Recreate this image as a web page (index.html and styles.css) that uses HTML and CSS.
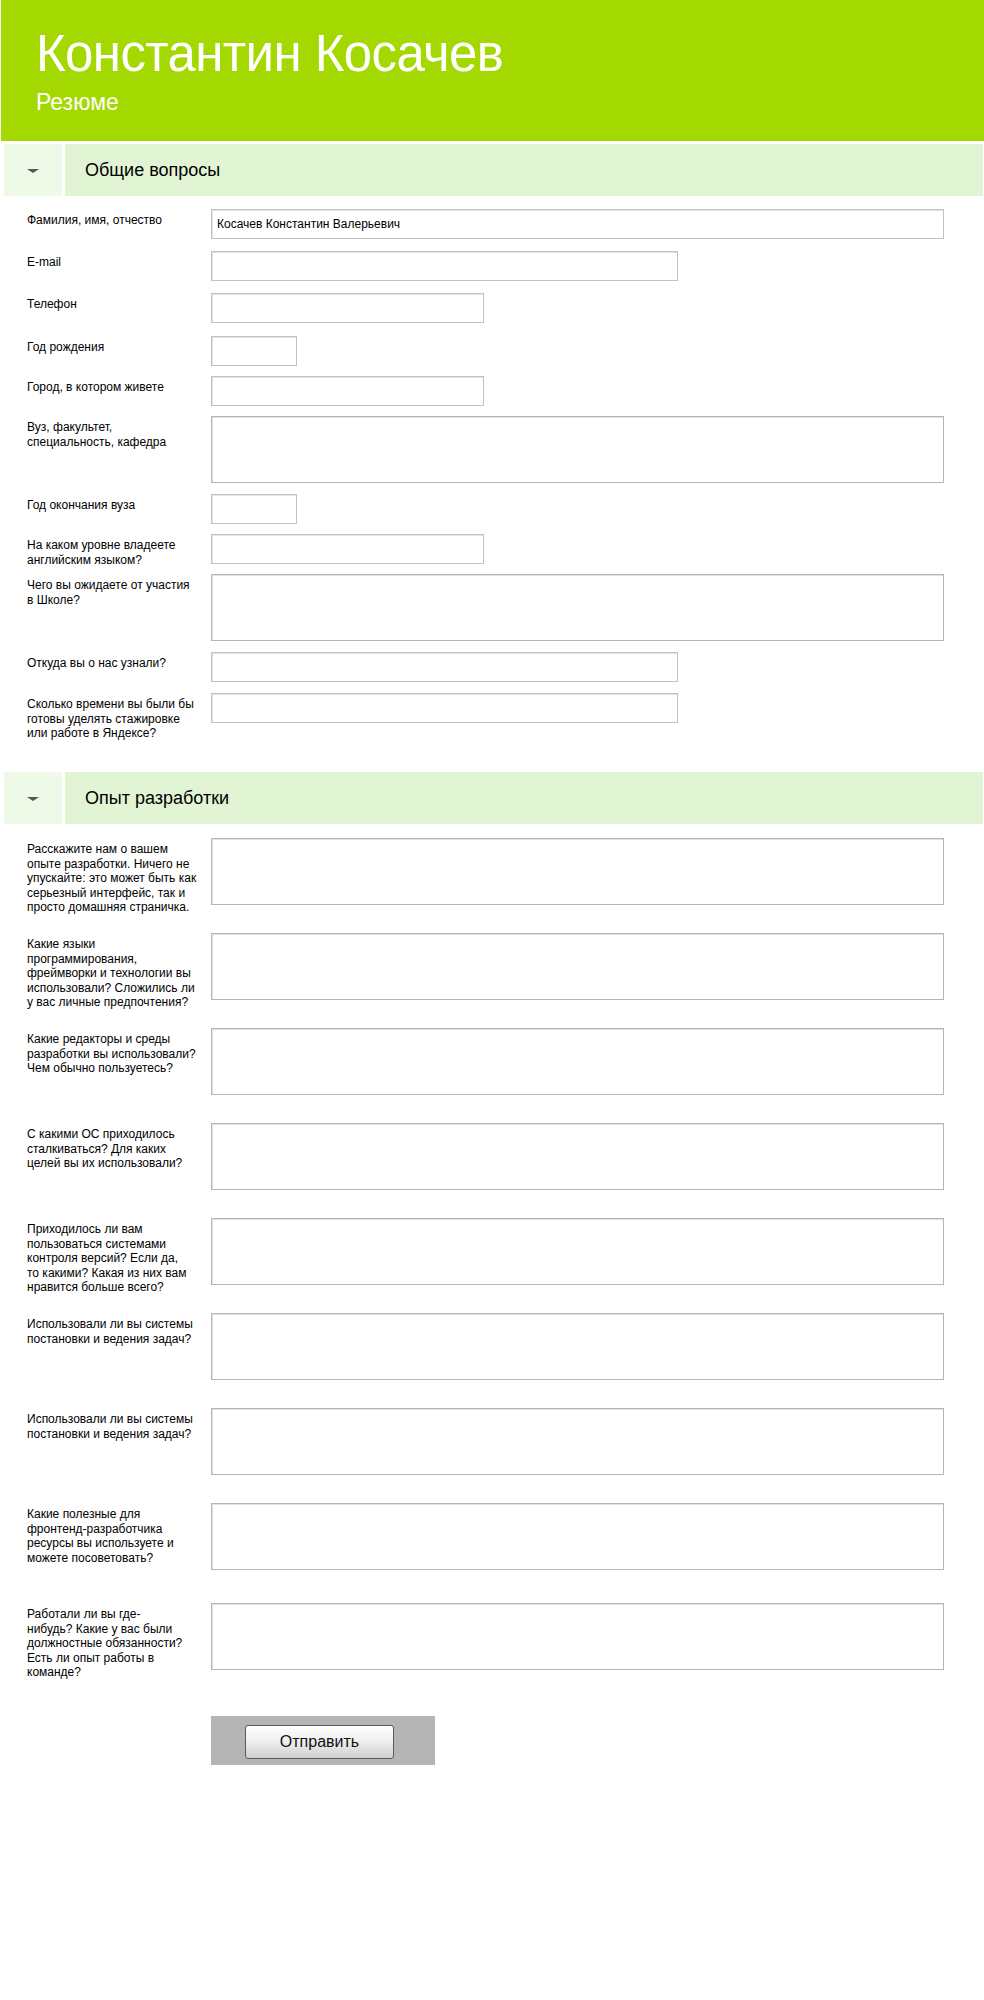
FILE: index.html
```html
<!DOCTYPE html>
<html lang="ru">
<head>
<meta charset="utf-8">
<title>Константин Косачев — Резюме</title>
<link rel="stylesheet" href="styles.css">
</head>
<body>
<header class="hero">
  <h1 class="hero__name">Константин Косачев</h1>
  <p class="hero__sub">Резюме</p>
</header>
<form class="resume">
  <section class="block">
    <div class="block__head">
      <span class="block__toggle"><span class="block__arrow"></span></span>
      <h2 class="block__title">Общие вопросы</h2>
    </div>
    <div class="block__body block__body--general">
      <div class="row row--gap12"><label class="row__label">Фамилия, имя, отчество</label><input class="field field--full" type="text" value="Косачев Константин Валерьевич"></div>
      <div class="row row--gap12"><label class="row__label">E-mail</label><input class="field field--medium" type="text"></div>
      <div class="row row--gap13"><label class="row__label">Телефон</label><input class="field field--small" type="text"></div>
      <div class="row row--gap10"><label class="row__label">Год рождения</label><input class="field field--tiny" type="text"></div>
      <div class="row row--gap10"><label class="row__label">Город, в котором живете</label><input class="field field--small" type="text"></div>
      <div class="row"><label class="row__label">Вуз, факультет,<br>специальность, кафедра</label><textarea class="area"></textarea></div>
      <div class="row row--gap10"><label class="row__label">Год окончания вуза</label><input class="field field--tiny" type="text"></div>
      <div class="row row--gap10"><label class="row__label">На каком уровне владеете<br>английским языком?</label><input class="field field--small" type="text"></div>
      <div class="row"><label class="row__label">Чего вы ожидаете от участия<br>в Школе?</label><textarea class="area"></textarea></div>
      <div class="row"><label class="row__label">Откуда вы о нас узнали?</label><input class="field field--medium" type="text"></div>
      <div class="row"><label class="row__label">Сколько времени вы были бы<br>готовы уделять стажировке<br>или работе в Яндексе?</label><input class="field field--medium" type="text"></div>
    </div>
  </section>
  <section class="block">
    <div class="block__head">
      <span class="block__toggle"><span class="block__arrow"></span></span>
      <h2 class="block__title">Опыт разработки</h2>
    </div>
    <div class="block__body block__body--dev">
      <div class="row"><label class="row__label">Расскажите нам о вашем<br>опыте разработки. Ничего не<br>упускайте: это может быть как<br>серьезный интерфейс, так и<br>просто домашняя страничка.</label><textarea class="area"></textarea></div>
      <div class="row"><label class="row__label">Какие языки<br>программирования,<br>фреймворки и технологии вы<br>использовали? Сложились ли<br>у вас личные предпочтения?</label><textarea class="area"></textarea></div>
      <div class="row"><label class="row__label">Какие редакторы и среды<br>разработки вы использовали?<br>Чем обычно пользуетесь?</label><textarea class="area"></textarea></div>
      <div class="row"><label class="row__label">С какими ОС приходилось<br>сталкиваться? Для каких<br>целей вы их использовали?</label><textarea class="area"></textarea></div>
      <div class="row"><label class="row__label">Приходилось ли вам<br>пользоваться системами<br>контроля версий? Если да,<br>то какими? Какая из них вам<br>нравится больше всего?</label><textarea class="area"></textarea></div>
      <div class="row"><label class="row__label">Использовали ли вы системы<br>постановки и ведения задач?</label><textarea class="area"></textarea></div>
      <div class="row"><label class="row__label">Использовали ли вы системы<br>постановки и ведения задач?</label><textarea class="area"></textarea></div>
      <div class="row row--gap33"><label class="row__label">Какие полезные для<br>фронтенд-разработчика<br>ресурсы вы используете и<br>можете посоветовать?</label><textarea class="area"></textarea></div>
      <div class="row"><label class="row__label">Работали ли вы где-<br>нибудь? Какие у вас были<br>должностные обязанности?<br>Есть ли опыт работы в<br>команде?</label><textarea class="area"></textarea></div>
    </div>
  </section>
  <div class="submit">
    <button class="submit__btn" type="submit">Отправить</button>
  </div>
</form>
</body>
</html>
```
FILE: styles.css
```css
* { box-sizing: border-box; }

html, body {
  margin: 0;
  padding: 0;
  background: #fff;
}

body {
  font-family: "Liberation Sans", Arial, sans-serif;
  color: #000;
}

.hero {
  margin-left: 1px;
  height: 141px;
  padding: 28px 0 0 35px;
  background: #a3d900;
  color: #fff;
}

.hero__name {
  margin: 0;
  font-size: 51px;
  line-height: 52px;
  letter-spacing: -0.6px;
  font-weight: normal;
}

.hero__sub {
  margin: 11px 0 0;
  font-size: 23px;
  line-height: 23px;
}

.block__head {
  display: flex;
  gap: 3px;
  height: 52px;
  margin: 3px 1px 0 4px;
}

.block__toggle {
  flex: 0 0 58px;
  display: flex;
  align-items: center;
  justify-content: center;
  background: #eff9e8;
}

.block__arrow {
  width: 0;
  height: 0;
  margin-top: 1px;
  border-left: 6px solid transparent;
  border-right: 6px solid transparent;
  border-top: 4px solid #555;
}

.block__title {
  flex: 1;
  margin: 0;
  padding-left: 20px;
  background: #e1f4d4;
  font-size: 18px;
  line-height: 52px;
  font-weight: normal;
}

.block__body {
  margin-left: 27px;
}

.block__body--general {
  padding: 13px 0 35px;
}

.block__body--dev {
  padding: 14px 0 0;
}

.row {
  display: grid;
  grid-template-columns: 184px auto;
  align-items: start;
  margin-bottom: 11px;
}

.block__body--dev .row { margin-bottom: 28px; }

.row--gap10 { margin-bottom: 10px; }
.row--gap12 { margin-bottom: 12px; }
.row--gap13 { margin-bottom: 13px; }
.block__body--dev .row--gap33 { margin-bottom: 33px; }

.row__label {
  padding-top: 4px;
  margin-bottom: -18px;
  font-size: 12px;
  line-height: 14.5px;
  white-space: nowrap;
}

.field,
.area {
  display: block;
  margin: 0;
  padding: 0 5px;
  border: 1px solid #c2c2c2;
  box-shadow: inset 1px 1px 0 #e2e2e2;
  background: #fff;
  font-family: "Liberation Sans", Arial, sans-serif;
  font-size: 12px;
  color: #000;
  outline: none;
}

.field { height: 30px; }

.field--full { width: 733px; }
.field--medium { width: 467px; }
.field--small { width: 273px; }
.field--tiny { width: 86px; }

.area {
  width: 733px;
  height: 67px;
  resize: none;
  border-color: #b5b5b5;
}

.submit {
  width: 224px;
  height: 49px;
  margin: 46px 0 0 211px;
  padding: 9px 0 0 34px;
  background: #b5b5b5;
}

.submit__btn {
  display: block;
  width: 149px;
  height: 34px;
  margin: 0;
  padding: 0;
  border: 1px solid #5a5a5a;
  border-radius: 3px;
  background: linear-gradient(to bottom, #ffffff 0%, #f0f0f0 45%, #cfcfcf 100%);
  font-family: "Liberation Sans", Arial, sans-serif;
  font-size: 16px;
  color: #111;
}
```
